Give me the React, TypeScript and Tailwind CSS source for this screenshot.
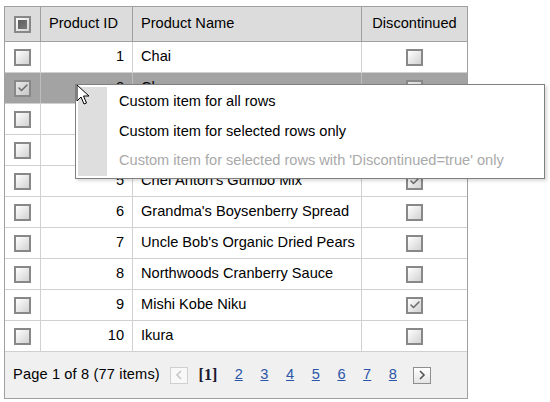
import { Check } from "lucide-react";

type Product = { id: number; name: string; discontinued: boolean };

const products: Product[] = [
  { id: 1, name: "Chai", discontinued: false },
  { id: 2, name: "Chang", discontinued: false },
  { id: 3, name: "Aniseed Syrup", discontinued: false },
  { id: 4, name: "Chef Anton's Cajun Seasoning", discontinued: false },
  { id: 5, name: "Chef Anton's Gumbo Mix", discontinued: true },
  { id: 6, name: "Grandma's Boysenberry Spread", discontinued: false },
  { id: 7, name: "Uncle Bob's Organic Dried Pears", discontinued: false },
  { id: 8, name: "Northwoods Cranberry Sauce", discontinued: false },
  { id: 9, name: "Mishi Kobe Niku", discontinued: true },
  { id: 10, name: "Ikura", discontinued: false },
];

function CheckBox({ checked, mixed, light }: { checked?: boolean; mixed?: boolean; light?: boolean }) {
  return (
    <div
      className={`w-[17px] h-[17px] border-2 border-[#888888] flex items-center justify-center ${
        light ? "bg-gradient-to-br from-[#e8e8e8] to-[#c8c8c8]" : "bg-gradient-to-br from-white to-[#d2d2d2]"
      }`}
    >
      {checked && <Check size={12} strokeWidth={3} className="text-[#6a6a6a]" />}
      {mixed && <div className="w-[9px] h-[9px] bg-gradient-to-br from-[#5c5c5c] to-[#7a7a7a]" />}
    </div>
  );
}

export default function App() {
  const grid = "grid grid-cols-[36px_92px_229px_1fr]";

  return (
    <div className="relative w-[550px] h-[402px] bg-white font-['Liberation_Sans',Arial,sans-serif] text-[14.6px] text-black">
      <div className="absolute left-[4px] top-[6px] w-[464px] border border-[#a0a0a0]">
        {/* header */}
        <div className={`${grid} h-[35px] bg-[#dcdcdc] border-b border-[#a0a0a0]`}>
          <div className="border-r border-[#a0a0a0] flex items-center justify-center">
            <CheckBox mixed />
          </div>
          <div className="border-r border-[#a0a0a0] flex items-center px-[8px]">Product ID</div>
          <div className="border-r border-[#a0a0a0] flex items-center px-[8px]">Product Name</div>
          <div className="flex items-center justify-center">Discontinued</div>
        </div>

        {/* rows */}
        {products.map((p) => {
          const sel = p.id === 2;
          const cell = `border-r ${sel ? "border-[#bdbdbd]" : "border-[#d0d0d0]"}`;
          return (
            <div
              key={p.id}
              className={`${grid} h-[31px] border-b border-[#d0d0d0] ${sel ? "bg-[#a3a3a3]" : "bg-white"}`}
            >
              <div className={`${cell} flex items-center justify-center`}>
                <CheckBox checked={sel} light={sel} />
              </div>
              <div className={`${cell} flex items-center justify-end px-[8px]`}>{p.id}</div>
              <div className={`${cell} flex items-center px-[8px] whitespace-nowrap`}>{p.name}</div>
              <div className="flex items-center justify-center">
                <CheckBox checked={p.discontinued} light={sel} />
              </div>
            </div>
          );
        })}

        {/* pager */}
        <div className="h-[46px] bg-[#f0f0f0] flex items-center pl-[8px]">
          <span className="tracking-[0.15px]">Page 1 of 8 (77 items)</span>
          <div className="ml-[10px] w-[18px] h-[17px] border border-[#d0d0d0] bg-[#f8f8f8] flex items-center justify-center">
            <svg width="8" height="10" viewBox="0 0 8 10">
              <path d="M6 1 L2 5 L6 9" fill="none" stroke="#c4c4c4" strokeWidth="1.5" />
            </svg>
          </div>
          <span className="ml-[7px] w-[26px] text-center font-['Liberation_Serif',serif] font-bold text-[16px] text-[#1a1a2e]">
            [1]
          </span>
          <div className="ml-[5px] flex">
            {[2, 3, 4, 5, 6, 7, 8].map((n) => (
              <span key={n} className="w-[25.7px] text-center text-[#2a55a8] underline">
                {n}
              </span>
            ))}
          </div>
          <div className="ml-[7px] w-[18px] h-[17px] border border-[#8e8e8e] bg-gradient-to-b from-white to-[#e4e4e4] flex items-center justify-center">
            <svg width="8" height="10" viewBox="0 0 8 10">
              <path d="M2 1 L6 5 L2 9" fill="none" stroke="#555" strokeWidth="1.6" />
            </svg>
          </div>
        </div>
      </div>

      {/* context menu */}
      <div className="absolute left-[75px] top-[84px] w-[470px] h-[95px] border border-[#808080] bg-white p-[2px] flex shadow-[2px_2px_3px_rgba(0,0,0,0.15)]">
        <div className="w-[29px] bg-[#dedede]" />
        <div className="flex flex-col pl-[12px]">
          <div className="h-[30px] flex items-center">Custom item for all rows</div>
          <div className="h-[30px] flex items-center">Custom item for selected rows only</div>
          <div className="h-[30px] flex items-center text-[#a9a9a9]">
            Custom item for selected rows with 'Discontinued=true' only
          </div>
        </div>
      </div>

      {/* mouse cursor */}
      <svg className="absolute left-[76px] top-[84px]" width="14" height="22" viewBox="0 0 14 22">
        <path
          d="M1 1 L1 17 L5 13 L8 20 L10.5 19 L7.5 12 L13 12 Z"
          fill="white"
          stroke="black"
          strokeWidth="1"
          strokeLinejoin="miter"
        />
      </svg>
    </div>
  );
}
